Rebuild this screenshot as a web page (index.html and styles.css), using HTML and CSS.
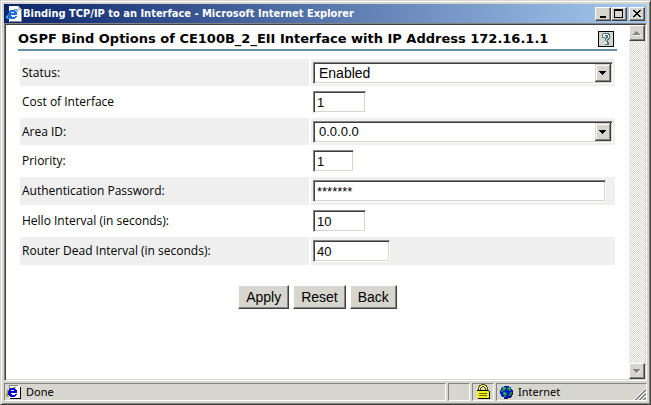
FILE: index.html
```html
<!DOCTYPE html>
<html lang="en">
<head>
    <meta charset="UTF-8">
    <meta name="viewport" content="width=device-width, initial-scale=1.0">
    <title>Binding TCP/IP to an Interface</title>
    <link rel="stylesheet" href="styles.css">
</head>
<body>
<div class="window">
    <header class="titlebar">
        <svg class="app-icon" viewBox="0 0 16 16" shape-rendering="crispEdges">
            <path d="M3 0h9l3 3v13H3z" fill="#fff"/>
            <path d="M12 0h1v1h1v1h1v1h1v1h-4z" fill="#c0c0c0"/>
            <path d="M15 4h1v12H4v-1h11z" fill="#888"/>
            <path d="M4 4h5v1h1v1h1v3H5v1h1v1h3v-1h2v1h-1v1H9v1H4v-1H3v-1H2V7h1V5h1zM5 6v1h3V6z" fill="#1c6be0" fill-rule="evenodd"/>
            <path d="M8 3h3v1h1v2h-1V5h-1V4H8zM1 9h1v3h2v1H1v-1H0v-2h1z" fill="#3fa0f8"/>
        </svg>
        <h1 class="title">Binding TCP/IP to an Interface - Microsoft Internet Explorer</h1>
        <div class="window-buttons">
            <button type="button" class="win-btn" aria-label="Minimize">
                <svg viewBox="0 0 12 10" shape-rendering="crispEdges"><path d="M3 7h6v2H3z"/></svg>
            </button>
            <button type="button" class="win-btn" aria-label="Maximize">
                <svg viewBox="0 0 12 10" shape-rendering="crispEdges"><path d="M1 0h9v9H1zM2 2v6h7V2z" fill-rule="evenodd"/></svg>
            </button>
            <button type="button" class="win-btn win-close" aria-label="Close">
                <svg viewBox="0 0 12 10" shape-rendering="crispEdges"><path d="M2 1h2v1h1v1h2V2h1V1h2v1H9v1H8v1H7v1h1v1h1v1h1v1H8V7H7V6H5v1H4v1H2V7h1V6h1V5h1V4H4V3H3V2H2z"/></svg>
            </button>
        </div>
    </header>

    <div class="viewport">
        <main class="page">
            <div class="page-head">
                <h2>OSPF Bind Options of CE100B_2_EII Interface with IP Address 172.16.1.1</h2>
                <button type="button" class="help" aria-label="Help">
                    <svg viewBox="0 0 14 14" shape-rendering="crispEdges">
                        <path d="M4 1h6v1h1v5h-1v1H9v2h1v3H6v-3h1V9H6V6H3V2h1z" fill="#447878"/>
                        <path d="M4 2h5v1h1v3H9v1H8v2H7V7h1V6h1V3H6v2H4zM6 10h2v2H6z" fill="#fff"/>
                        <path d="M6 4h1v2H6z" fill="#d6d6ce"/>
                    </svg>
                </button>
            </div>

            <form>
                <table class="options">
                    <tr class="shaded short">
                        <td class="name"><label for="status">Status:</label></td>
                        <td><select id="status"><option>Enabled</option><option>Disabled</option></select></td>
                    </tr>
                    <tr>
                        <td class="name"><label for="cost">Cost of Interface</label></td>
                        <td><input type="text" id="cost" class="w-medium" value="1"></td>
                    </tr>
                    <tr class="shaded short">
                        <td class="name"><label for="area">Area ID:</label></td>
                        <td><select id="area" class="digits"><option>0.0.0.0</option></select></td>
                    </tr>
                    <tr>
                        <td class="name"><label for="priority">Priority:</label></td>
                        <td><input type="text" id="priority" class="w-small" value="1"></td>
                    </tr>
                    <tr class="shaded">
                        <td class="name"><label for="password">Authentication Password:</label></td>
                        <td><input type="text" id="password" class="w-full" value="*******" autocomplete="off"></td>
                    </tr>
                    <tr>
                        <td class="name"><label for="hello">Hello Interval (in seconds):</label></td>
                        <td><input type="text" id="hello" class="w-medium" value="10"></td>
                    </tr>
                    <tr class="shaded">
                        <td class="name"><label for="dead">Router Dead Interval (in seconds):</label></td>
                        <td><input type="text" id="dead" class="w-large" value="40"></td>
                    </tr>
                </table>

                <div class="actions">
                    <button type="button">Apply</button>
                    <button type="reset">Reset</button>
                    <button type="button">Back</button>
                </div>
            </form>
        </main>

        <div class="scrollbar">
            <button type="button" class="scroll-btn" aria-label="Scroll up">
                <svg viewBox="0 0 12 12" shape-rendering="crispEdges"><path d="M5 4h1v1h1v1h1v1h1v1H2V7h1V6h1V5h1z" fill="#848484"/><path d="M3 8h7v1H3z" fill="#fff"/></svg>
            </button>
            <button type="button" class="scroll-btn" aria-label="Scroll down">
                <svg viewBox="0 0 12 12" shape-rendering="crispEdges"><path d="M2 4h7v1H8v1H7v1H6v1H5V7H4V6H3V5H2z" fill="#848484"/><path d="M9 5h1v1H9zM8 6h1v1H8zM7 7h1v1H7zM6 8h1v1H6z" fill="#fff"/></svg>
            </button>
        </div>
    </div>

    <footer class="statusbar">
        <div class="panel panel-main">
            <svg class="status-icon" viewBox="0 0 16 16" shape-rendering="crispEdges">
                <path d="M3 1h9l3 3v11H3z" fill="#fff"/>
                <path d="M3 1h9v1H4v3H3z" fill="#848484"/>
                <path d="M12 1h1v1h1v1h1v1h-3z" fill="#fff"/>
                <path d="M14 3h1v12H4v-1h10z" fill="#000"/>
                <path d="M4 4h5v1h1v1h1v3H5v1h1v1h3v-1h2v1h-1v1H9v1H4v-1H3v-1H2V7h1V5h1zM5 6v1h3V6z" fill="#0000e0" fill-rule="evenodd"/>
                <path d="M7 3h3v1H7zM1 6h2v1H2v2H1zM0 9h2v3H0zM1 12h2v1H1z" fill="#a8a400"/>
            </svg>
            <span>Done</span>
        </div>
        <div class="panel panel-small"></div>
        <div class="panel panel-small">
            <svg class="lock-icon" viewBox="0 0 14 16" shape-rendering="crispEdges">
                <path d="M5 0h4v1h2v2h1v4H9V4H8V3H6v1H5v3H2V3h1V1h2z" fill="#4a4a00"/>
                <path d="M5 1h4v1h1v1h1v4h-1V4H9V3H8V2H6v1H5v1H4v3H3V3h1V2h1z" fill="#e8e880"/>
                <path d="M1 6h12v1h1v8H2v-1H1z" fill="#000"/>
                <path d="M1 7h12v7H1z" fill="#f4f020"/>
                <path d="M3 9h8v1H3zM3 11h8v1H3z" fill="#706c00"/>
            </svg>
        </div>
        <div class="panel panel-zone">
            <svg class="status-icon" viewBox="0 0 16 16" shape-rendering="crispEdges">
                <path d="M6 2h5v1h2v2h1v6h-1v1h-1v1h-2v1H6v-1H4v-1H3v-2H2V6h1V4h1V3h2z" fill="#0010e0"/>
                <path d="M5 3h3v2H7v2H5v1H3V6h1V4h1zM10 3h2v1h1v3h-2V6H9V4h1zM5 8h3v1h1v2H8v2H6v-2H5zM12 8h2v2h-1v2h-2v-2h1z" fill="#109038"/>
                <path d="M5 4h2v1H5zM11 4h1v1h-1zM6 9h1v1H6z" fill="#60e070"/>
                <path d="M14 6h1v5h-1v2h-1v1h-3v1H6v-1h4v-1h2v-1h1v-2h1z" fill="#181838"/>
            </svg>
            <span>Internet</span>
            <svg class="grip" viewBox="0 0 12 12">
                <path d="M0 12L12 0M4 12l8-8M8 12l4-4" stroke="#fff"/>
                <path d="M1 12L12 1M2 12L12 2M5 12l7-7M6 12l6-6M9 12l3-3M10 12l2-2" stroke="#848484"/>
            </svg>
        </div>
    </footer>
</div>
</body>
</html>
```

FILE: styles.css
```css
* {
    box-sizing: border-box;
}

body {
    margin: 0;
    background-color: #d6d6ce;
    color: #000;
    font-family: "Liberation Sans", Arial, sans-serif;
}

svg {
    display: block;
    flex: none;
}

button {
    padding: 0;
    color: #000;
    background-color: #d6d6ce;
    border: 1px solid;
    border-color: #fff #404040 #404040 #fff;
    box-shadow: inset -1px -1px #848484;
    font-family: inherit;
}

.window {
    display: flex;
    flex-direction: column;
    min-height: 100vh;
    padding: 3px;
    border: 1px solid;
    border-color: #d6d6ce #404040 #404040 #d6d6ce;
    box-shadow: inset 1px 1px #fff, inset -1px -1px #848484;
}

/* title bar */
.titlebar {
    display: flex;
    align-items: center;
    height: 19px;
    padding: 0 2px;
    background: linear-gradient(to right, #0a246a, #a6caf0);
}

.app-icon {
    width: 16px;
    height: 16px;
}

.title {
    flex: 1;
    margin: 0 0 0 1px;
    color: #fff;
    font: bold 11px/16px "DejaVu Sans Condensed", Tahoma, sans-serif;
    white-space: nowrap;
    overflow: hidden;
}

.window-buttons {
    display: flex;
}

.win-btn {
    width: 16px;
    height: 14px;
}

.win-btn svg {
    width: 12px;
    height: 10px;
    margin: 1px;
}

.win-close {
    margin-left: 2px;
}

/* document area */
.viewport {
    display: flex;
    flex: 1;
    padding: 1px;
    background-color: #fff;
    border: 1px solid;
    border-color: #848484 #fff #fff #848484;
    box-shadow: inset 1px 1px #404040, inset -1px -1px #d6d6ce;
}

.page {
    flex: 1;
    padding: 0 12px;
}

.page-head {
    display: flex;
    align-items: center;
    justify-content: space-between;
    height: 26px;
    padding: 4px 3px 0 0;
    border-bottom: 2px solid #638ca5;
}

.page-head h2 {
    margin: 0;
    font: bold 13px/18px "DejaVu Sans", Verdana, sans-serif;
    white-space: nowrap;
}

.help {
    width: 16px;
    height: 16px;
    border-color: #000;
    box-shadow: none;
}

.options {
    width: 100%;
    margin-top: 6px;
    table-layout: fixed;
    border-spacing: 2px;
}

.options tr {
    height: 28px;
}

.options tr.short {
    height: 27px;
}

.options td {
    padding: 0 2px;
    font-size: 0;
    vertical-align: middle;
}

.options .name {
    width: 289px;
    font: 12px/16px "Open Sans", sans-serif;
}

.shaded td {
    background-color: #efefef;
}

select,
input {
    height: 22px;
    margin: 0;
    color: #000;
    background-color: #fff;
    border: 1px solid;
    border-color: #848484 #fff #fff #848484;
    border-radius: 0;
    box-shadow: inset 1px 1px #404040, inset -1px -1px #d6d6ce;
    font: 14px/18px "Liberation Sans", Arial, sans-serif;
}

input {
    padding: 1px 3px;
}

input,
select.digits {
    font-size: 13px;
}

/* drop-down with its own raised arrow button */
select {
    width: 100%;
    padding: 0 20px 0 5px;
    appearance: none;
    background: #fff url("data:image/svg+xml,%3Csvg xmlns='http://www.w3.org/2000/svg' width='16' height='18' shape-rendering='crispEdges'%3E%3Cpath d='M0 0h16v18H0z' fill='%23404040'/%3E%3Cpath d='M0 0h15v17H0z' fill='%23d6d6ce'/%3E%3Cpath d='M1 1h14v16H1z' fill='%23848484'/%3E%3Cpath d='M1 1h13v15H1z' fill='%23fff'/%3E%3Cpath d='M2 2h12v14H2z' fill='%23d6d6ce'/%3E%3Cpath d='M4 7h7v1h-1v1H9v1H8v1H7v-1H6V9H5V8H4z'/%3E%3C/svg%3E") no-repeat right 1px center;
}

.w-small {
    width: 41px;
}

.w-medium {
    width: 53px;
}

.w-large {
    width: 77px;
}

.w-full {
    width: 293px;
}

.actions {
    display: flex;
    justify-content: center;
    gap: 4px;
    margin-top: 18px;
}

.actions button {
    height: 24px;
    padding: 0 7px;
    font-size: 14px;
}

/* scrollbar */
.scrollbar {
    display: flex;
    flex-direction: column;
    justify-content: space-between;
    width: 16px;
    background: repeating-conic-gradient(#d6d6ce 0 25%, #fff 0 50%) 0 0 / 2px 2px;
}

.scroll-btn {
    width: 16px;
    height: 16px;
}

.scroll-btn svg {
    width: 12px;
    height: 12px;
    margin: 1px;
}

/* status bar */
.statusbar {
    display: flex;
    gap: 2px;
    margin-top: 2px;
    font: 11px/16px "Noto Sans", Tahoma, sans-serif;
}

.panel {
    display: flex;
    align-items: center;
    height: 18px;
    border: 1px solid;
    border-color: #848484 #fff #fff #848484;
}

.panel-main {
    flex: 1;
    gap: 4px;
    padding-left: 1px;
}

.panel-small {
    justify-content: center;
    width: 22px;
}

.panel-zone {
    gap: 4px;
    width: 151px;
    padding-left: 1px;
}

.status-icon {
    width: 16px;
    height: 16px;
}

.lock-icon {
    width: 14px;
    height: 16px;
}

.grip {
    align-self: flex-end;
    width: 12px;
    height: 12px;
    margin-left: auto;
}
```
